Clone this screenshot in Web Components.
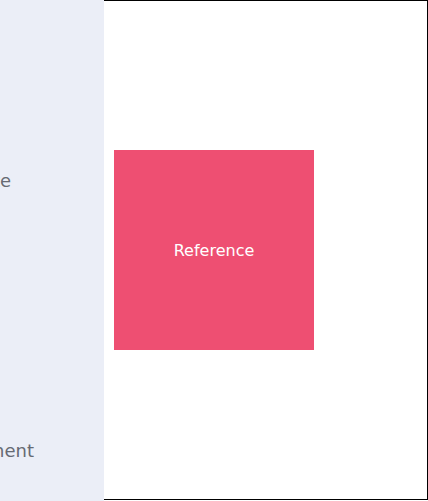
<!DOCTYPE html>
<html lang="en">
<head>
<meta charset="utf-8">
<title>Placement demo</title>
<style>
body { margin: 0; min-height: 100vh; font-family: "DejaVu Sans", sans-serif; }
</style>
</head>
<body>
<placement-demo>
  <side-panel slot="side">
    <panel-label>te</panel-label>
    <panel-label>nent</panel-label>
  </side-panel>
  <demo-stage><reference-box>Reference</reference-box></demo-stage>
</placement-demo>
<script>
const define = (name, markup) => customElements.define(name, class extends HTMLElement {
  constructor() {
    super();
    this.attachShadow({ mode: "open" }).innerHTML = markup;
  }
});
define("placement-demo", `<style>
  :host { display: grid; grid-template-columns: 104px 1fr; min-height: 100vh; }
</style><slot name="side"></slot><slot></slot>`);
define("side-panel", `<style>
  :host { display: grid; grid-auto-rows: 270px; padding-top: 45px; box-sizing: border-box;
    overflow: hidden; background: #ebeef7; color: #666a73; font-size: 18px; height: 100vh; }
</style><slot></slot>`);
define("panel-label", `<style>
  :host { display: flex; align-items: center; margin-left: -7px; }
</style><slot></slot>`);
define("demo-stage", `<style>
  :host { display: flex; align-items: center; box-sizing: border-box; margin-bottom: 1px;
    padding-left: 10px; background: #fff; border: 1px solid #000; border-left: 0; }
</style><slot></slot>`);
define("reference-box", `<style>
  :host { display: grid; place-items: center; width: 200px; aspect-ratio: 1;
    background: #ee4f72; color: #fff; font-size: 16px; }
</style><slot></slot>`);
</script>
</body>
</html>
